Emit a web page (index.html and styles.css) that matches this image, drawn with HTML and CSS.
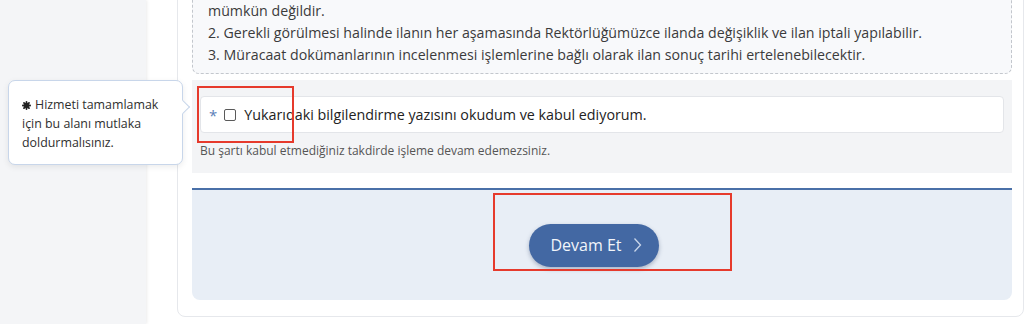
FILE: index.html
```html
<!DOCTYPE html>
<html>
	<head>
		<title>Başvuru</title>
		<link rel="stylesheet" href="styles.css">
	</head>
	<body>
		<div class="sidebar"></div>
		<div class="main">
			<div class="card">
				<div class="info-box">
					<div>mümkün değildir.</div>
					<div>2. Gerekli görülmesi halinde ilanın her aşamasında Rektörlüğümüzce ilanda değişiklik ve ilan iptali yapılabilir.</div>
					<div>3. Müracaat dokümanlarının incelenmesi işlemlerine bağlı olarak ilan sonuç tarihi ertelenebilecektir.</div>
				</div>
				<div class="agree-section">
					<label class="agree-box">
						<span class="required">*</span>
						<span class="checkbox"></span>
						<span class="agree-text">Yukarıdaki bilgilendirme yazısını okudum ve kabul ediyorum.</span>
					</label>
					<div class="help-text">Bu şartı kabul etmediğiniz takdirde işleme devam edemezsiniz.</div>
				</div>
				<div class="actions">
					<button class="next-button">Devam Et
						<svg width="9" height="16" viewBox="0 0 9 16"><path d="M1.5 1.5 L7.5 8 L1.5 14.5" fill="none" stroke="#c9d6ea" stroke-width="1.3"/></svg>
					</button>
				</div>
			</div>
		</div>
		<div class="tooltip">
			<svg class="tip-star" width="9" height="9" viewBox="0 0 10 10">
				<g stroke="#222" stroke-width="2" stroke-linecap="round">
					<path d="M5 1 V9 M1 5 H9 M2.2 2.2 L7.8 7.8 M7.8 2.2 L2.2 7.8"/>
				</g>
			</svg>Hizmeti tamamlamak için bu alanı mutlaka doldurmalısınız.
		</div>
		<div class="mark mark-check"></div>
		<div class="mark mark-button"></div>
	</body>
</html>
```

FILE: styles.css
```css
body {
	margin: 0;
	height: 324px;
	overflow: hidden;
	display: flex;
	background-color: #ffffff;
	font-family: "Open Sans", "Noto Sans", sans-serif;
	color: #3a3a3a;
}

.sidebar {
	width: 146px;
	flex-shrink: 0;
	background-color: #f4f5f7;
	box-shadow: 1px 0 3px rgba(0, 0, 0, 0.08);
}

.main {
	flex: 1;
	padding-left: 31px;
}

.card {
	margin-top: -25px;
	padding: 15px 11px 16px 14px;
	border: 1px solid #e6e8ec;
	border-radius: 8px;
	background-color: #ffffff;
}

.info-box {
	padding: 8px 15px 7px 15px;
	border: 1px dashed #c3c7cd;
	border-radius: 7px;
	background-color: #f8f9fb;
	font-size: 14.2px;
	line-height: 22px;
	color: #3b3b3b;
}

.agree-section {
	margin-top: 6px;
	padding: 16px 8px 13px 8px;
	background-color: #f3f4f6;
}

.agree-box {
	display: flex;
	align-items: center;
	height: 35px;
	padding-left: 8px;
	border: 1px solid #e3e5e9;
	border-radius: 4px;
	background-color: #ffffff;
}

.required {
	color: #5b80b8;
	font-size: 15px;
	margin-right: 7px;
}

.checkbox {
	width: 10px;
	height: 10px;
	border: 1px solid #5a5a5a;
	border-radius: 2px;
	margin-right: 8px;
}

.agree-text {
	font-size: 14.3px;
	color: #222222;
}

.help-text {
	margin-top: 9px;
	font-size: 12px;
	line-height: 18px;
	color: #555555;
}

.actions {
	margin-top: 15px;
	height: 110px;
	border-top: 2px solid #4a70a8;
	border-radius: 0 0 8px 8px;
	background-color: #e8eef6;
	display: flex;
	align-items: center;
	justify-content: center;
}

.next-button {
	display: flex;
	align-items: center;
	gap: 11px;
	height: 43px;
	width: 130px;
	margin-right: 16px;
	justify-content: center;
	padding: 0 0 0 4px;
	border: none;
	border-radius: 22px;
	background-color: #4368a3;
	color: #f2f5fa;
	font-family: "Open Sans", "Noto Sans", sans-serif;
	font-size: 16px;
	box-shadow: 0 2px 4px rgba(40, 60, 100, 0.35);
}

.tooltip {
	position: absolute;
	left: 8px;
	top: 80px;
	width: 150px;
	padding: 14px 10px 12px 13px;
	border: 1px solid #c8d6ea;
	border-radius: 7px;
	background-color: #ffffff;
	box-shadow: 0 2px 6px rgba(0, 0, 0, 0.08);
	font-size: 12.4px;
	line-height: 19px;
	color: #2f2f2f;
}

.tip-star {
	margin-right: 4px;
	vertical-align: -1px;
}

.tooltip::after {
	content: "";
	position: absolute;
	right: -6px;
	top: 21px;
	width: 9px;
	height: 9px;
	background-color: #ffffff;
	border-top: 1px solid #c8d6ea;
	border-right: 1px solid #c8d6ea;
	transform: rotate(45deg);
}

.mark {
	position: absolute;
	border: 2px solid #e63a2c;
	pointer-events: none;
}

.mark-check {
	left: 197px;
	top: 86px;
	width: 93px;
	height: 53px;
}

.mark-button {
	left: 493px;
	top: 193px;
	width: 235px;
	height: 74px;
}
```
